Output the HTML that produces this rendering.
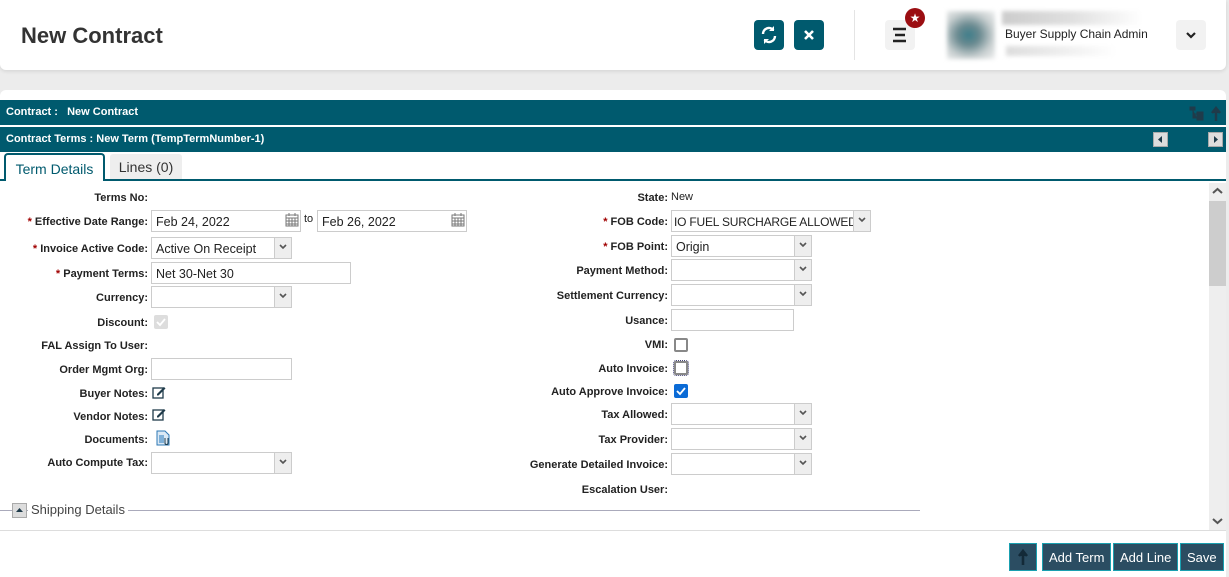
<!DOCTYPE html>
<html><head><meta charset="utf-8">
<style>
*{box-sizing:border-box;margin:0;padding:0}
body{width:1229px;height:577px;overflow:hidden;background:#ececec;font-family:"Liberation Sans",sans-serif;position:relative;color:#222}
.a{position:absolute}
.hdr{left:0;top:0;width:1226px;height:70px;background:#fff;border-radius:0 0 6px 6px;box-shadow:0 1px 4px rgba(0,0,0,.12)}
.title{left:21px;top:23px;font-size:22px;font-weight:bold;color:#333}
.tb{width:30px;height:30px;background:#005a6e;border-radius:4px;color:#fff;text-align:center}
.panel{left:0;top:90px;width:1226px;height:487px;background:#fff;border-radius:6px 6px 0 0}
.bar{left:0;width:1226px;background:#005a6e;color:#fff;font-size:11px;font-weight:bold;padding-left:6px}
.lbl{font-size:11px;font-weight:bold;text-align:right;color:#222;line-height:14px;margin-top:1px}
.lbl b{color:#a00000}
.L{right:1081px}
.R{right:561px}
.inp{height:22px;border:1px solid #ccc;background:#fff;font-size:12.5px;padding:4px 4px 0;color:#222;white-space:nowrap;overflow:hidden}
.sel{height:22px;border:1px solid #ccc;background:#fff;font-size:12.5px;padding:4px 4px 0;color:#222;white-space:nowrap;overflow:hidden}
.sel::after{content:"";position:absolute;right:0;top:0;width:16px;height:20px;background:#eee;border-left:1px solid #ccc}
.sel i{position:absolute;right:3px;top:3px;z-index:2;width:10px;height:10px}
.cb{width:14px;height:14px;border:2px solid #888;border-radius:2px;background:#fff}
.btn{top:543px;height:28px;background:#2b4d62;border:1px solid #19a0b0;color:#fff;font-size:13px;padding:6px 6px 0}
</style></head><body>
<div class="a hdr"></div>
<div class="a title">New Contract</div>
<div class="a tb" style="left:754px;top:20px"><svg width="30" height="30" viewBox="0 0 30 30"><path d="M9 14a6 6 0 0 1 10.5-4M21 16a6 6 0 0 1-10.5 4" stroke="#fff" stroke-width="2.4" fill="none"/><path d="M20 6v5h-5zM10 24v-5h5z" fill="#fff"/></svg></div>
<div class="a tb" style="left:794px;top:20px"><svg width="30" height="30"><path d="M11 11l8 8M19 11l-8 8" stroke="#fff" stroke-width="2.6"/></svg></div>
<div class="a" style="left:854px;top:10px;width:1px;height:50px;background:#e4e4e4"></div>
<div class="a" style="left:885px;top:20px;width:30px;height:30px;background:#f2f2f2;border-radius:4px"><svg width="30" height="30"><path d="M8 9h13M10 15h10M8 21h13" stroke="#222" stroke-width="2.4"/></svg></div>
<div class="a" style="left:905px;top:8px;width:20px;height:20px;border-radius:50%;background:#9b0e12;color:#fff;font-size:12px;text-align:center;line-height:20px">★</div>
<div class="a" style="left:947px;top:11px;width:48px;height:48px;background:radial-gradient(ellipse at 45% 50%,#3c7d8a 0,#6b8a90 30%,#c8cfd0 65%,#f2f2f2 100%);filter:blur(2px)"></div>
<div class="a" style="left:1002px;top:11px;width:140px;height:14px;background:linear-gradient(90deg,#ccc,#e0e0e0,#fff);filter:blur(2px)"></div>
<div class="a" style="left:1005px;top:27px;font-size:12px;color:#222">Buyer Supply Chain Admin</div>
<div class="a" style="left:1006px;top:46px;width:110px;height:10px;background:linear-gradient(90deg,#ddd,#eee,#fff);filter:blur(2px)"></div>
<div class="a" style="left:1176px;top:20px;width:30px;height:30px;background:#f2f2f2;border-radius:4px"><svg width="30" height="30"><path d="M11 13l4 4 4-4" stroke="#222" stroke-width="2.2" fill="none"/></svg></div>

<div class="a panel"></div>
<div class="a bar" style="top:100px;height:25px;line-height:25px">Contract :&nbsp;&nbsp; New Contract</div>
<svg class="a" style="left:1188px;top:105px" width="36" height="18"><path d="M2 2h5v3H2zM5 5v8h4M5 9h4M9 7h6v4H9zM9 11h6v4H9z" fill="#1f3b4a" stroke="#1f3b4a" stroke-width="1"/><path d="M28 16V4M24 8l4-5 4 5" stroke="#1f3b4a" stroke-width="2.5" fill="#1f3b4a"/></svg>
<div class="a bar" style="top:127px;height:25px;line-height:25px">Contract Terms : New Term (TempTermNumber-1)</div>
<div class="a" style="left:1153px;top:132px;width:15px;height:15px;background:#ddd;border:1px solid #aaa"><svg width="13" height="13"><path d="M8 3v7L4 6.5z" fill="#1f3b4a"/></svg></div>
<div class="a" style="left:1208px;top:132px;width:15px;height:15px;background:#ddd;border:1px solid #aaa"><svg width="13" height="13"><path d="M5 3v7l4-3.5z" fill="#1f3b4a"/></svg></div>
<div class="a" style="left:0;top:179px;width:1226px;height:2px;background:#005a6e"></div>
<div class="a" style="left:4px;top:153px;width:101px;height:28px;background:#fff;border:2px solid #005a6e;border-bottom:none;border-radius:4px 4px 0 0;font-size:14px;color:#005a6e;text-align:center;padding-top:6px">Term Details</div>
<div class="a" style="left:110px;top:154px;width:72px;height:25px;background:#eee;border-radius:3px 3px 0 0;font-size:14px;color:#333;text-align:center;padding-top:5px">Lines (0)</div>

<div class="a" style="left:1209px;top:183px;width:17px;height:347px;background:#eee"></div>
<div class="a" style="left:1209px;top:201px;width:17px;height:85px;background:#cdcdcd"></div>
<svg class="a" style="left:1209px;top:184px" width="17" height="14"><path d="M4 9l4.5-4 4.5 4" stroke="#555" stroke-width="2" fill="none"/></svg>
<svg class="a" style="left:1209px;top:514px" width="17" height="14"><path d="M4 5l4.5 4 4.5-4" stroke="#555" stroke-width="2" fill="none"/></svg>

<div class="a lbl L" style="top:190px">Terms No:</div>
<div class="a lbl L" style="top:214px"><b>*</b> Effective Date Range:</div>
<div class="a inp" style="left:151px;top:210px;width:150px">Feb 24, 2022</div>
<svg class="a" style="left:285px;top:213px" width="14" height="14"><rect x="1" y="2" width="12" height="11" fill="none" stroke="#777"/><path d="M1 5h12M4 5v8M7 5v8M10 5v8M1 8h12M1 11h12M4 0v3M10 0v3" stroke="#777"/></svg>
<div class="a" style="left:304px;top:213px;font-size:11px">to</div>
<div class="a inp" style="left:317px;top:210px;width:150px">Feb 26, 2022</div>
<svg class="a" style="left:451px;top:213px" width="14" height="14"><rect x="1" y="2" width="12" height="11" fill="none" stroke="#777"/><path d="M1 5h12M4 5v8M7 5v8M10 5v8M1 8h12M1 11h12M4 0v3M10 0v3" stroke="#777"/></svg>
<div class="a lbl L" style="top:241px"><b>*</b> Invoice Active Code:</div>
<div class="a sel" style="left:151px;top:237px;width:141px">Active On Receipt<i><svg width="10" height="10"><path d="M2 3l3 3 3-3" stroke="#555" stroke-width="1.6" fill="none"/></svg></i></div>
<div class="a lbl L" style="top:266px"><b>*</b> Payment Terms:</div>
<div class="a inp" style="left:151px;top:262px;width:200px">Net 30-Net 30</div>
<div class="a lbl L" style="top:290px">Currency:</div>
<div class="a sel" style="left:151px;top:286px;width:141px"><i><svg width="10" height="10"><path d="M2 3l3 3 3-3" stroke="#555" stroke-width="1.6" fill="none"/></svg></i></div>
<div class="a lbl L" style="top:315px">Discount:</div>
<div class="a" style="left:154px;top:315px;width:14px;height:14px;background:#ddd;border-radius:2px"><svg width="14" height="14"><path d="M3 7l3 3 5-6" stroke="#fff" stroke-width="1.8" fill="none"/></svg></div>
<div class="a lbl L" style="top:338px">FAL Assign To User:</div>
<div class="a lbl L" style="top:362px">Order Mgmt Org:</div>
<div class="a inp" style="left:151px;top:358px;width:141px"></div>
<div class="a lbl L" style="top:386px">Buyer Notes:</div>
<svg class="a" style="left:152px;top:385px" width="14" height="14"><rect x="1" y="3" width="10" height="10" fill="none" stroke="#1f3b4a" stroke-width="1.3"/><path d="M5 9l7-7 1.5 1.5-7 7H5z" fill="#1f3b4a"/></svg>
<div class="a lbl L" style="top:409px">Vendor Notes:</div>
<svg class="a" style="left:152px;top:407px" width="14" height="14"><rect x="1" y="3" width="10" height="10" fill="none" stroke="#1f3b4a" stroke-width="1.3"/><path d="M5 9l7-7 1.5 1.5-7 7H5z" fill="#1f3b4a"/></svg>
<div class="a lbl L" style="top:432px">Documents:</div>
<svg class="a" style="left:156px;top:430px" width="14" height="16"><path d="M1 1h8l4 4v10H1z" fill="#dbe9f5" stroke="#2e78b5"/><path d="M3 5h5v8H3z" fill="#7fb0d8"/><path d="M9 8v5a1.5 1.5 0 0 0 3 0V8" stroke="#1f3b4a" fill="none"/></svg>
<div class="a lbl L" style="top:455px">Auto Compute Tax:</div>
<div class="a sel" style="left:151px;top:452px;width:141px"><i><svg width="10" height="10"><path d="M2 3l3 3 3-3" stroke="#555" stroke-width="1.6" fill="none"/></svg></i></div>

<div class="a lbl R" style="top:190px">State:</div>
<div class="a" style="left:671px;top:191px;font-size:11px">New</div>
<div class="a lbl R" style="top:214px"><b>*</b> FOB Code:</div>
<div class="a sel" style="left:671px;top:210px;width:200px;padding-left:2px;font-size:12px;letter-spacing:-0.2px">IO FUEL SURCHARGE ALLOWED<i><svg width="10" height="10"><path d="M2 3l3 3 3-3" stroke="#555" stroke-width="1.6" fill="none"/></svg></i></div>
<div class="a lbl R" style="top:239px"><b>*</b> FOB Point:</div>
<div class="a sel" style="left:671px;top:235px;width:141px">Origin<i><svg width="10" height="10"><path d="M2 3l3 3 3-3" stroke="#555" stroke-width="1.6" fill="none"/></svg></i></div>
<div class="a lbl R" style="top:263px">Payment Method:</div>
<div class="a sel" style="left:671px;top:259px;width:141px"><i><svg width="10" height="10"><path d="M2 3l3 3 3-3" stroke="#555" stroke-width="1.6" fill="none"/></svg></i></div>
<div class="a lbl R" style="top:288px">Settlement Currency:</div>
<div class="a sel" style="left:671px;top:284px;width:141px"><i><svg width="10" height="10"><path d="M2 3l3 3 3-3" stroke="#555" stroke-width="1.6" fill="none"/></svg></i></div>
<div class="a lbl R" style="top:313px">Usance:</div>
<div class="a inp" style="left:671px;top:309px;width:123px"></div>
<div class="a lbl R" style="top:337px">VMI:</div>
<div class="a cb" style="left:674px;top:338px"></div>
<div class="a lbl R" style="top:361px">Auto Invoice:</div>
<div class="a cb" style="left:674px;top:361px;outline:1px dotted #447"></div>
<div class="a lbl R" style="top:384px">Auto Approve Invoice:</div>
<div class="a" style="left:674px;top:384px;width:14px;height:14px;background:#0b6bd6;border-radius:2px"><svg width="14" height="14"><path d="M3 7l3 3 5-6" stroke="#fff" stroke-width="1.8" fill="none"/></svg></div>
<div class="a lbl R" style="top:407px">Tax Allowed:</div>
<div class="a sel" style="left:671px;top:403px;width:141px"><i><svg width="10" height="10"><path d="M2 3l3 3 3-3" stroke="#555" stroke-width="1.6" fill="none"/></svg></i></div>
<div class="a lbl R" style="top:432px">Tax Provider:</div>
<div class="a sel" style="left:671px;top:428px;width:141px"><i><svg width="10" height="10"><path d="M2 3l3 3 3-3" stroke="#555" stroke-width="1.6" fill="none"/></svg></i></div>
<div class="a lbl R" style="top:457px">Generate Detailed Invoice:</div>
<div class="a sel" style="left:671px;top:453px;width:141px"><i><svg width="10" height="10"><path d="M2 3l3 3 3-3" stroke="#555" stroke-width="1.6" fill="none"/></svg></i></div>
<div class="a lbl R" style="top:482px">Escalation User:</div>

<div class="a" style="left:0;top:510px;width:920px;height:1px;background:#aab"></div>
<div class="a" style="left:12px;top:503px;width:15px;height:15px;background:#ddd;border:1px solid #aaa"><svg width="13" height="13"><path d="M3 8l3.5-4 3.5 4z" fill="#1f3b4a"/></svg></div>
<div class="a" style="left:28px;top:502px;background:#fff;padding:0 3px;font-size:13px;color:#444">Shipping Details</div>
<div class="a" style="left:0;top:530px;width:1226px;height:1px;background:#ddd"></div>

<div class="a btn" style="left:1009px;width:28px;padding:4px 0 0;text-align:center"><svg width="14" height="18"><path d="M7 17V4M3 8l4-5 4 5" stroke="#132a38" stroke-width="2.6" fill="#132a38"/></svg></div>
<div class="a btn" style="left:1042px">Add Term</div>
<div class="a btn" style="left:1113px">Add Line</div>
<div class="a btn" style="left:1180px">Save</div>
</body></html>
